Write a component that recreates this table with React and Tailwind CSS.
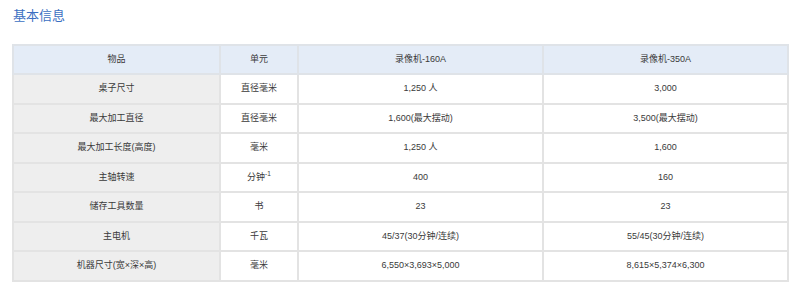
import React from "react";

const rows = [
  ["桌子尺寸", "直径毫米", "1,250 人", "3,000"],
  ["最大加工直径", "直径毫米", "1,600(最大摆动)", "3,500(最大摆动)"],
  ["最大加工长度(高度)", "毫米", "1,250 人", "1,600"],
  ["主轴转速", "sup", "400", "160"],
  ["储存工具数量", "书", "23", "23"],
  ["主电机", "千瓦", "45/37(30分钟/连续)", "55/45(30分钟/连续)"],
  ["机器尺寸(宽×深×高)", "毫米", "6,550×3,693×5,000", "8,615×5,374×6,300"],
];

export default function App() {
  return (
    <div className="w-[800px] h-[290px] bg-white pt-[8px] pl-[12px]" style={{ fontFamily: '"Liberation Sans", "Noto Sans CJK SC", sans-serif' }}>
      <h2 className="text-[13px] leading-[15px] text-[#3b6fc2] pl-[1px] font-normal">基本信息</h2>
      <table className="mt-[21px] w-[775px] border-collapse text-[9px] text-[#3a3a3a] text-center table-fixed">
        <colgroup>
          <col className="w-[207px]" />
          <col className="w-[78px]" />
          <col className="w-[245px]" />
          <col className="w-[245px]" />
        </colgroup>
        <thead>
          <tr className="h-[29px] bg-[#e4ecf7]">
            <th className="border-2 border-[#dfe3e8] font-normal">物品</th>
            <th className="border-2 border-[#dfe3e8] font-normal">单元</th>
            <th className="border-2 border-[#dfe3e8] font-normal">录像机-160A</th>
            <th className="border-2 border-[#dfe3e8] font-normal">录像机-350A</th>
          </tr>
        </thead>
        <tbody>
          {rows.map((r, i) => (
            <tr key={i} className="h-[29.5px]">
              <td className="border-2 border-[#e3e3e3] bg-[#eeeeee]">{r[0]}</td>
              <td className="border-2 border-[#e3e3e3]">
                {r[1] === "sup" ? (
                  <span>分钟<sup className="text-[6.5px]">-1</sup></span>
                ) : (
                  r[1]
                )}
              </td>
              <td className="border-2 border-[#e3e3e3]">{r[2]}</td>
              <td className="border-2 border-[#e3e3e3]">{r[3]}</td>
            </tr>
          ))}
        </tbody>
      </table>
    </div>
  );
}
